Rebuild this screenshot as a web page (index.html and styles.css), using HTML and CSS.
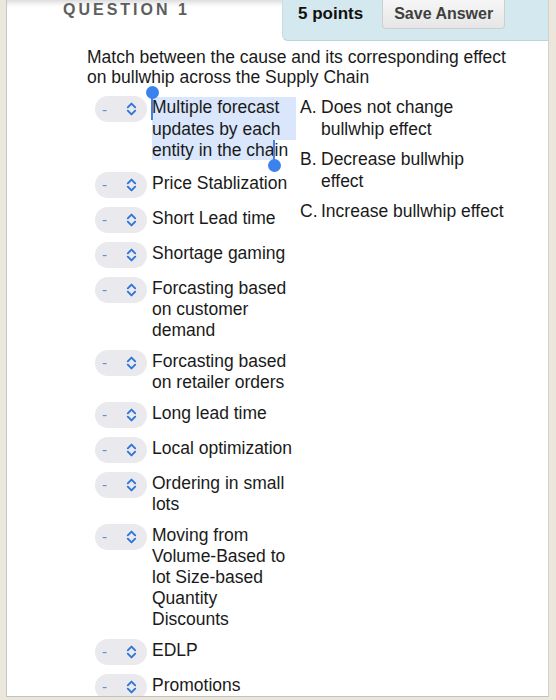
FILE: index.html
```html
<!DOCTYPE html>
<html>
<head>
<meta charset="utf-8">
<link rel="stylesheet" href="styles.css">
</head>
<body>
<div class="frame">
  <div class="panel">
    <div class="header">
      <div class="qtitle">QUESTION 1</div>
      <div class="pointsbox">
        <span class="points">5 points</span>
        <span class="savebtn">Save Answer</span>
      </div>
    </div>
    <div class="qtext">Match between the cause and its corresponding effect on bullwhip across the Supply Chain</div>
    <div class="matches">
      <div class="causes">
        <div class="row first">
          <div class="pill"><span class="dash">-</span><svg class="chev" width="11" height="14" viewBox="0 0 11 14"><path d="M1.8 5.3 L5.5 1.6 L9.2 5.3 M1.8 8.7 L5.5 12.4 L9.2 8.7" fill="none" stroke="#2f74d6" stroke-width="1.9" stroke-linecap="round" stroke-linejoin="round"/></svg></div>
          <div class="label"><span class="selblock">Multiple forecast updates by each</span><span class="sel">entity in the cha</span>in</div>
          <span class="handle start"></span>
          <span class="handle end"></span>
        </div>
        <div class="row">
          <div class="pill"><span class="dash">-</span><svg class="chev" width="11" height="14" viewBox="0 0 11 14"><path d="M1.8 5.3 L5.5 1.6 L9.2 5.3 M1.8 8.7 L5.5 12.4 L9.2 8.7" fill="none" stroke="#2f74d6" stroke-width="1.9" stroke-linecap="round" stroke-linejoin="round"/></svg></div>
          <div class="label">Price Stablization</div>
        </div>
        <div class="row">
          <div class="pill"><span class="dash">-</span><svg class="chev" width="11" height="14" viewBox="0 0 11 14"><path d="M1.8 5.3 L5.5 1.6 L9.2 5.3 M1.8 8.7 L5.5 12.4 L9.2 8.7" fill="none" stroke="#2f74d6" stroke-width="1.9" stroke-linecap="round" stroke-linejoin="round"/></svg></div>
          <div class="label">Short Lead time</div>
        </div>
        <div class="row">
          <div class="pill"><span class="dash">-</span><svg class="chev" width="11" height="14" viewBox="0 0 11 14"><path d="M1.8 5.3 L5.5 1.6 L9.2 5.3 M1.8 8.7 L5.5 12.4 L9.2 8.7" fill="none" stroke="#2f74d6" stroke-width="1.9" stroke-linecap="round" stroke-linejoin="round"/></svg></div>
          <div class="label">Shortage gaming</div>
        </div>
        <div class="row">
          <div class="pill"><span class="dash">-</span><svg class="chev" width="11" height="14" viewBox="0 0 11 14"><path d="M1.8 5.3 L5.5 1.6 L9.2 5.3 M1.8 8.7 L5.5 12.4 L9.2 8.7" fill="none" stroke="#2f74d6" stroke-width="1.9" stroke-linecap="round" stroke-linejoin="round"/></svg></div>
          <div class="label">Forcasting based on customer demand</div>
        </div>
        <div class="row">
          <div class="pill"><span class="dash">-</span><svg class="chev" width="11" height="14" viewBox="0 0 11 14"><path d="M1.8 5.3 L5.5 1.6 L9.2 5.3 M1.8 8.7 L5.5 12.4 L9.2 8.7" fill="none" stroke="#2f74d6" stroke-width="1.9" stroke-linecap="round" stroke-linejoin="round"/></svg></div>
          <div class="label">Forcasting based on retailer orders</div>
        </div>
        <div class="row">
          <div class="pill"><span class="dash">-</span><svg class="chev" width="11" height="14" viewBox="0 0 11 14"><path d="M1.8 5.3 L5.5 1.6 L9.2 5.3 M1.8 8.7 L5.5 12.4 L9.2 8.7" fill="none" stroke="#2f74d6" stroke-width="1.9" stroke-linecap="round" stroke-linejoin="round"/></svg></div>
          <div class="label">Long lead time</div>
        </div>
        <div class="row">
          <div class="pill"><span class="dash">-</span><svg class="chev" width="11" height="14" viewBox="0 0 11 14"><path d="M1.8 5.3 L5.5 1.6 L9.2 5.3 M1.8 8.7 L5.5 12.4 L9.2 8.7" fill="none" stroke="#2f74d6" stroke-width="1.9" stroke-linecap="round" stroke-linejoin="round"/></svg></div>
          <div class="label">Local optimization</div>
        </div>
        <div class="row">
          <div class="pill"><span class="dash">-</span><svg class="chev" width="11" height="14" viewBox="0 0 11 14"><path d="M1.8 5.3 L5.5 1.6 L9.2 5.3 M1.8 8.7 L5.5 12.4 L9.2 8.7" fill="none" stroke="#2f74d6" stroke-width="1.9" stroke-linecap="round" stroke-linejoin="round"/></svg></div>
          <div class="label">Ordering in small lots</div>
        </div>
        <div class="row">
          <div class="pill"><span class="dash">-</span><svg class="chev" width="11" height="14" viewBox="0 0 11 14"><path d="M1.8 5.3 L5.5 1.6 L9.2 5.3 M1.8 8.7 L5.5 12.4 L9.2 8.7" fill="none" stroke="#2f74d6" stroke-width="1.9" stroke-linecap="round" stroke-linejoin="round"/></svg></div>
          <div class="label">Moving from Volume-Based to lot Size-based Quantity Discounts</div>
        </div>
        <div class="row">
          <div class="pill"><span class="dash">-</span><svg class="chev" width="11" height="14" viewBox="0 0 11 14"><path d="M1.8 5.3 L5.5 1.6 L9.2 5.3 M1.8 8.7 L5.5 12.4 L9.2 8.7" fill="none" stroke="#2f74d6" stroke-width="1.9" stroke-linecap="round" stroke-linejoin="round"/></svg></div>
          <div class="label">EDLP</div>
        </div>
        <div class="row">
          <div class="pill"><span class="dash">-</span><svg class="chev" width="11" height="14" viewBox="0 0 11 14"><path d="M1.8 5.3 L5.5 1.6 L9.2 5.3 M1.8 8.7 L5.5 12.4 L9.2 8.7" fill="none" stroke="#2f74d6" stroke-width="1.9" stroke-linecap="round" stroke-linejoin="round"/></svg></div>
          <div class="label">Promotions</div>
        </div>
      </div>
      <div class="answers">
        <div class="ans"><span class="letter">A.</span><span class="atext">Does not change bullwhip effect</span></div>
        <div class="ans"><span class="letter">B.</span><span class="atext">Decrease bullwhip effect</span></div>
        <div class="ans"><span class="letter">C.</span><span class="atext">Increase bullwhip effect</span></div>
      </div>
    </div>
  </div>
</div>
</body>
</html>
```

FILE: styles.css
```css
html, body {
  margin: 0;
  padding: 0;
}
body {
  background: #ebe7dc;
  font-family: "Liberation Sans", Arial, sans-serif;
  color: #1a1a1a;
  width: 556px;
  height: 700px;
  overflow: hidden;
}
.frame {
  padding-left: 6px;
  height: 700px;
}
.panel {
  width: 541px;
  height: 696px;
  background: #ffffff;
  border-left: 1px solid #c9c6c0;
  border-right: 1px solid #d4d1ca;
  border-bottom: 1px solid #c4c1bb;
  box-shadow: inset 0 7px 6px -5px rgba(0,0,0,0.18);
  overflow: hidden;
}
.header {
  display: flex;
  align-items: flex-start;
  height: 41px;
}
.qtitle {
  margin-left: 56px;
  margin-top: 1px;
  font-weight: bold;
  font-size: 16px;
  letter-spacing: 3px;
  color: #5e5e5e;
  line-height: 18px;
  flex: 1;
}
.pointsbox {
  width: 250px;
  height: 40px;
  background: #d4e9ef;
  border-bottom: 1px solid #bcd3da;
  border-left: 1px solid #c6dde3;
  border-bottom-left-radius: 6px;
  display: flex;
  align-items: flex-start;
  padding-left: 15px;
}
.points {
  font-weight: bold;
  font-size: 17px;
  line-height: 28px;
  color: #111;
  margin-right: 19px;
}
.savebtn {
  font-weight: bold;
  font-size: 16px;
  color: #3f3f3f;
  height: 28px;
  line-height: 27px;
  padding: 0 11px;
  background: linear-gradient(#f6f6f6, #e6e6e6);
  border: 1px solid #cfcfcf;
  border-top: none;
  border-radius: 0 0 4px 4px;
}
.qtext {
  margin: 7px 0 0 80px;
  width: 440px;
  font-size: 17.5px;
  line-height: 19.5px;
}
.matches {
  display: flex;
  margin-left: 88px;
  margin-top: 9px;
}
.causes {
  width: 205px;
  display: flex;
  flex-direction: column;
  gap: 9px;
}
.row {
  display: flex;
  align-items: flex-start;
  position: relative;
}
.row.first {
  margin-bottom: 1px;
}
.row.first .label {
  line-height: 21.5px;
}
.pill {
  width: 52px;
  height: 26px;
  flex: none;
  border-radius: 13px;
  background: #e9e9ee;
  display: flex;
  align-items: center;
}
.dash {
  color: #5d8fd8;
  font-size: 15px;
  margin-left: 7px;
  width: 24px;
}
.chev {
  display: block;
}
.label {
  margin-left: 5px;
  width: 144px;
  font-size: 17.5px;
  line-height: 21px;
  padding-top: 1px;
}
.selblock {
  display: block;
  background: #d9e6fb;
}
.sel {
  background: #d9e6fb;
}
.handle {
  position: absolute;
  width: 2px;
  background: #3b82ee;
}
.handle::after {
  content: "";
  position: absolute;
  width: 13px;
  height: 13px;
  border-radius: 50%;
  background: #3b82ee;
  left: -5.5px;
}
.handle.start {
  left: 56px;
  top: -4px;
  height: 28px;
}
.handle.start::after {
  top: -6px;
}
.handle.end {
  left: 178px;
  top: 44px;
  height: 25px;
}
.handle.end::after {
  bottom: -7px;
}
.answers {
  display: flex;
  flex-direction: column;
  gap: 9px;
  padding-top: 1px;
}
.ans {
  display: flex;
  font-size: 17.5px;
  line-height: 21.5px;
}
.letter {
  width: 21px;
  flex: none;
}
.atext {
  width: 186px;
}
```
